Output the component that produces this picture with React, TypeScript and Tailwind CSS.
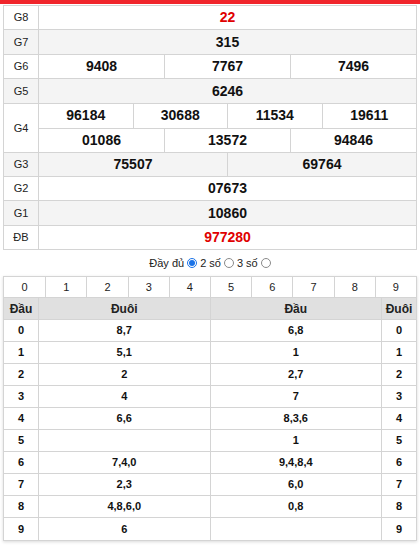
import React from 'react';

const font = { fontFamily: '"Liberation Sans", Arial, sans-serif' };

const Row: React.FC<{ label: string; h: string; gray?: boolean; last?: boolean; children: React.ReactNode }> = ({ label, h, gray, last, children }) => (
  <div className={`flex ${h} ${gray ? 'bg-[#f4f4f4]' : 'bg-white'} ${last ? '' : 'border-b border-[#d4d4d4]'}`}>
    <div className="w-[35px] shrink-0 flex items-center justify-center border-r border-[#d4d4d4] text-[11px] text-[#222]">
      {label}
    </div>
    <div className="flex-1 flex flex-col">{children}</div>
  </div>
);

const Cells: React.FC<{ values: string[]; red?: boolean; className?: string }> = ({ values, red, className = '' }) => (
  <div className={`flex flex-1 ${className}`}>
    {values.map((v, i) => (
      <div
        key={i}
        className={`flex-1 flex items-center justify-center text-[14px] font-bold ${red ? 'text-[#e00000]' : 'text-[#111]'} ${i > 0 ? 'border-l border-[#d4d4d4]' : ''}`}
      >
        {v}
      </div>
    ))}
  </div>
);

const Radio: React.FC<{ checked?: boolean }> = ({ checked }) => (
  <span
    className={`inline-flex items-center justify-center w-[10px] h-[10px] rounded-full border ${checked ? 'border-[#1a73e8]' : 'border-[#8a8a8a]'} bg-white`}
  >
    {checked && <span className="w-[6px] h-[6px] rounded-full bg-[#1a73e8]" />}
  </span>
);

const loto: [string, string, string][] = [
  ['8,7', '6,8', '0'],
  ['5,1', '1', '1'],
  ['2', '2,7', '2'],
  ['4', '7', '3'],
  ['6,6', '8,3,6', '4'],
  ['', '1', '5'],
  ['7,4,0', '9,4,8,4', '6'],
  ['2,3', '6,0', '7'],
  ['4,8,6,0', '0,8', '8'],
  ['6', '', '9'],
];

export default function App() {
  return (
    <div className="w-[420px] h-[546px] bg-white overflow-hidden" style={font}>
      <div className="h-[4px] bg-[#f0252b]" />

      {/* Results table */}
      <div className="mx-[3px] mt-[1px] border border-[#d4d4d4]">
        <Row label="G8" h="h-[24px]">
          <Cells values={['22']} red />
        </Row>
        <Row label="G7" h="h-[25px]" gray>
          <Cells values={['315']} />
        </Row>
        <Row label="G6" h="h-[24px]">
          <Cells values={['9408', '7767', '7496']} />
        </Row>
        <Row label="G5" h="h-[25px]" gray>
          <Cells values={['6246']} />
        </Row>
        <Row label="G4" h="h-[49px]">
          <Cells values={['96184', '30688', '11534', '19611']} className="border-b border-[#d4d4d4]" />
          <Cells values={['01086', '13572', '94846']} />
        </Row>
        <Row label="G3" h="h-[24px]" gray>
          <Cells values={['75507', '69764']} />
        </Row>
        <Row label="G2" h="h-[24px]">
          <Cells values={['07673']} />
        </Row>
        <Row label="G1" h="h-[25px]" gray>
          <Cells values={['10860']} />
        </Row>
        <Row label="ĐB" h="h-[23px]" last>
          <Cells values={['977280']} red />
        </Row>
      </div>

      {/* Options */}
      <div className="h-[26px] flex items-center justify-center gap-[3px] text-[11px] text-[#222]">
        <span>Đầy đủ</span>
        <Radio checked />
        <span>2 số</span>
        <Radio />
        <span>3 số</span>
        <Radio />
      </div>

      {/* Loto table */}
      <div className="mx-[3px] border border-[#d4d4d4] shadow-[0_1px_3px_rgba(0,0,0,0.15)]">
        <div className="grid grid-cols-10 h-[21px] border-b border-[#d4d4d4] bg-white">
          {Array.from({ length: 10 }, (_, i) => (
            <div
              key={i}
              className={`flex items-center justify-center text-[11px] text-[#222] ${i > 0 ? 'border-l border-[#d4d4d4]' : ''}`}
            >
              {i}
            </div>
          ))}
        </div>
        <div className="grid grid-cols-[35px_1fr_1fr_34px] h-[22px] bg-[#e0e0e0] border-b border-[#d4d4d4] text-[12px] font-bold text-[#222]">
          <div className="flex items-center justify-center border-r border-[#d4d4d4]">Đầu</div>
          <div className="flex items-center justify-center border-r border-[#d4d4d4]">Đuôi</div>
          <div className="flex items-center justify-center border-r border-[#d4d4d4]">Đầu</div>
          <div className="flex items-center justify-center">Đuôi</div>
        </div>
        {loto.map(([tail, head, d], i) => (
          <div
            key={i}
            className={`grid grid-cols-[35px_1fr_1fr_34px] h-[22px] bg-white text-[11px] font-bold text-[#111] ${i < loto.length - 1 ? 'border-b border-[#d4d4d4]' : ''}`}
          >
            <div className="flex items-center justify-center border-r border-[#d4d4d4]">{i}</div>
            <div className="flex items-center justify-center border-r border-[#d4d4d4]">{tail}</div>
            <div className="flex items-center justify-center border-r border-[#d4d4d4]">{head}</div>
            <div className="flex items-center justify-center">{d}</div>
          </div>
        ))}
      </div>
    </div>
  );
}
